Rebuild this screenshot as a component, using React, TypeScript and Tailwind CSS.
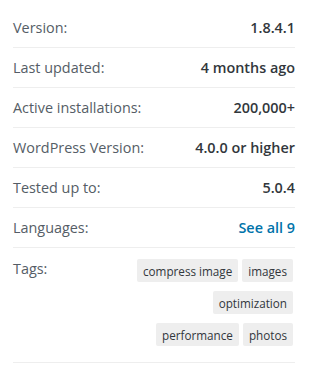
const rows: { label: string; value: string; link?: boolean }[] = [
  { label: "Version:", value: "1.8.4.1" },
  { label: "Last updated:", value: "4 months ago" },
  { label: "Active installations:", value: "200,000+" },
  { label: "WordPress Version:", value: "4.0.0 or higher" },
  { label: "Tested up to:", value: "5.0.4" },
  { label: "Languages:", value: "See all 9", link: true },
];

const tagRows = [["compress image", "images"], ["optimization"], ["performance", "photos"]];

export default function App() {
  return (
    <div className="w-[309px] h-[366px] bg-white px-[13px] pt-[8px] font-['Open_Sans',sans-serif] text-[14.4px] leading-5">
      <ul className="w-[282px]">
        {rows.map((r) => (
          <li key={r.label} className="flex h-10 items-center justify-between border-b border-[#eeeeee]">
            <span className="text-[#555d66]">{r.label}</span>
            {r.link ? (
              <a href="#" className="font-semibold text-[#0073aa]">{r.value}</a>
            ) : (
              <span className="font-semibold text-[#32373c]">{r.value}</span>
            )}
          </li>
        ))}
        <li className="flex justify-between border-b border-[#eeeeee] pt-[11px] pb-[16px]">
          <span className="text-[#555d66]">Tags:</span>
          <div className="flex flex-col items-end gap-[9px] pr-[2px]">
            {tagRows.map((tr, i) => (
              <div key={i} className="flex gap-[4px]">
                {tr.map((t) => (
                  <a
                    key={t}
                    href="#"
                    className="flex h-[23px] items-center rounded-[2px] bg-[#eeeeee] px-[6px] text-[11.7px] text-[#32373c]"
                  >
                    {t}
                  </a>
                ))}
              </div>
            ))}
          </div>
        </li>
      </ul>
    </div>
  );
}
